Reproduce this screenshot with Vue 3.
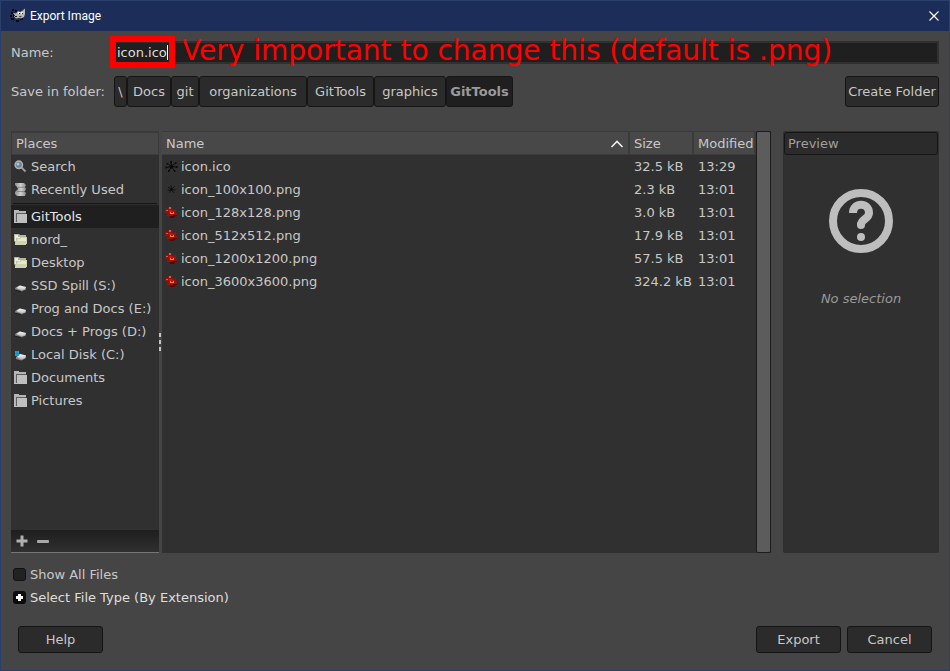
<script setup>
import { ref } from 'vue'

const fileName = ref('icon.ico')
const showAll = ref(false)

const crumbs = ['\\', 'Docs', 'git', 'organizations', 'GitTools', 'graphics', 'GitTools']

const shortcuts = [
  { label: 'Search', icon: 'search' },
  { label: 'Recently Used', icon: 'recent' },
]

const places = [
  { label: 'GitTools', icon: 'folder', active: true },
  { label: 'nord_', icon: 'home' },
  { label: 'Desktop', icon: 'home' },
  { label: 'SSD Spill (S:)', icon: 'disk' },
  { label: 'Prog and Docs (E:)', icon: 'disk' },
  { label: 'Docs + Progs (D:)', icon: 'disk' },
  { label: 'Local Disk (C:)', icon: 'system' },
  { label: 'Documents', icon: 'folder' },
  { label: 'Pictures', icon: 'folder' },
]

const files = [
  { name: 'icon.ico', size: '32.5 kB', modified: '13:29', icon: 'splat' },
  { name: 'icon_100x100.png', size: '2.3 kB', modified: '13:01', icon: 'splat-small' },
  { name: 'icon_128x128.png', size: '3.0 kB', modified: '13:01', icon: 'red' },
  { name: 'icon_512x512.png', size: '17.9 kB', modified: '13:01', icon: 'red' },
  { name: 'icon_1200x1200.png', size: '57.5 kB', modified: '13:01', icon: 'red' },
  { name: 'icon_3600x3600.png', size: '324.2 kB', modified: '13:01', icon: 'red' },
]
</script>

<template>
  <div class="window">
    <svg class="defs" aria-hidden="true">
      <defs>
        <linearGradient id="gDisk" x1="0" y1="0" x2="0" y2="1">
          <stop offset="0" stop-color="#f8f8f8" />
          <stop offset="1" stop-color="#b4b4b4" />
        </linearGradient>
        <linearGradient id="gRecent" x1="0" y1="0" x2="1" y2="0">
          <stop offset="0" stop-color="#8d8d8d" />
          <stop offset="0.5" stop-color="#d0d0d0" />
          <stop offset="1" stop-color="#8d8d8d" />
        </linearGradient>
        <symbol id="i-search" viewBox="0 0 13 13">
          <path d="M7.500 7.500 L11.500 11.500" stroke="#9a9a9a" stroke-width="2" />
          <circle cx="4.800" cy="4.800" r="3.700" fill="#6f8298" stroke="#b0b0b0" stroke-width="1.500" />
          <circle cx="4" cy="4" r="1.500" fill="#b4c4d2" />
        </symbol>
        <symbol id="i-recent" viewBox="0 0 13 13">
          <path d="M1 0 H10 L12 2 L11 4 H3 L1 2 Z" fill="url(#gRecent)" />
          <path d="M3 4 H11 L12 6 L11 8 H2 L4 6 Z" fill="url(#gRecent)" />
          <path d="M1 9 L2 8 H10 L12 10 L11 13 H3 L1 11 Z" fill="url(#gRecent)" />
          <path d="M4 4.300 H11 M3 8.500 H10" stroke="#777" stroke-width="0.700" />
        </symbol>
        <symbol id="i-folder" viewBox="0 0 13 13">
          <path d="M0 0 H5 V1 H12 V3 H2 V12 H0 Z" fill="#b5b5b5" />
          <path d="M2 3 H12 V4 H3 V12 H2 Z" fill="#5e5e5e" />
          <path d="M3 4 H13 V13 H0 V12 H3 Z" fill="#bfbfbf" />
        </symbol>
        <symbol id="i-home" viewBox="0 0 13 13">
          <path d="M0 1 H5 L6 2 H12 V12 H1 V9 L0 8 Z" fill="#b4b79a" />
          <path d="M1 2 H4 V4 H11 V5 H2 V8 H1 Z" fill="#eef0d6" />
          <path d="M3 5 H6 V4 H13 V11 H12 V12 H1 V11 Z" fill="#cfd3b0" />
          <path d="M4 6 H7 V5 H12 V8 H3 Z" fill="#e6e9cf" />
        </symbol>
        <symbol id="i-disk" viewBox="0 0 13 13">
          <path d="M1 9 L5 6.500 L12 8 V10.500 L7.500 12.500 L1 11 Z" fill="#777" />
          <path d="M2 9 L6 6.500 L12 8 L11 10.500 L7.500 11.500 Z" fill="url(#gDisk)" />
          <path d="M0.500 11 L7 12.500" stroke="#1d1d1d" />
        </symbol>
        <symbol id="i-system" viewBox="0 0 13 13">
          <path d="M2 9 L6 6 L12 7.500 V10 L7.500 12.500 L2 11 Z" fill="#888" />
          <path d="M3 9 L6 6 L12 7.500 L11 10 L7.500 11.500 Z" fill="url(#gDisk)" />
          <path d="M1 3 H5 V8 H1 Z" fill="#12a7dc" />
          <path d="M1 5.500 H5 M3 3 V8" stroke="#0b86ba" stroke-width="0.500" />
        </symbol>
        <symbol id="i-splat" viewBox="0 0 13 13">
          <g stroke="#0a0a0a" fill="#0a0a0a">
            <path d="M6.500 6.500 L6 1.500 M6.500 6.500 L10.500 3 M6.500 6.500 L11.500 7 M6.500 6.500 L9.500 11 M6.500 6.500 L4 11 M6.500 6.500 L1.500 7.500 M6.500 6.500 L2.500 3.500" />
            <circle cx="6.500" cy="6.500" r="1.500" />
            <path d="M5 1 H7 V3 H5 Z M10 2 H11.500 V4 H10 Z M11 6 H12.500 V8 H11 Z M9 10 H10.500 V12 H9 Z M3 10 H4.500 V12 H3 Z M0.500 6.500 H2 V8.500 H0.500 Z M1.500 3 H3 V4.500 H1.500 Z" stroke="none" />
          </g>
        </symbol>
        <symbol id="i-splat-small" viewBox="0 0 13 13">
          <g stroke="#0f0f0f" fill="#0f0f0f" stroke-width="0.900">
            <path d="M6.500 6.500 L6 2.500 M6.500 6.500 L9.500 3.500 M6.500 6.500 L10.500 7 M6.500 6.500 L9 10 M6.500 6.500 L4.500 10 M6.500 6.500 L2.500 7.500 M6.500 6.500 L3 4" />
            <circle cx="6.500" cy="6.500" r="0.800" />
          </g>
        </symbol>
        <symbol id="i-red" viewBox="0 0 13 13">
          <path d="M3 1 H7 V4 H9 V3 H11 V5 H11 V7 H12 V10 H10 V11 H9 V12 H5 V10 H2 V8 H3 V7 H0 V3 H3 Z" fill="#a00c07" />
          <path d="M9 9 H12 V10 H10 V11 H9 V12 H5 V10 H8 V9 H9 Z" fill="#560403" />
          <path d="M4 4 H7 V5 H9 V6 H4 Z" fill="#c8150d" />
          <path d="M4 1 H6 V3 H4 Z M1 4 H3 V5 H1 Z" fill="#b9625e" />
          <path d="M5 6 H6 V7 H8 V6 H9 V8 H5 Z" fill="#e58a35" />
        </symbol>
      </defs>
    </svg>

    <header class="titlebar">
      <svg class="logo" viewBox="0 0 16 16" width="16" height="16" aria-hidden="true">
        <path d="M2 1 H4 V3 H2 Z M5 2 H7 V4 H5 Z M1 4 H3 V6 H1 Z M0 7 H2 V9 H0 Z M3 6 H5 V9 H3 Z M1 10 H4 V12 H1 Z M6 12 H9 V14 H6 Z M10 10 H13 V12 H10 Z" fill="#060a14" />
        <path d="M3 5 L6 5.500 L8 3 L10 4 L12 3 L15 0.500 V6 L14 9 L11 10.500 L9 10 L6 10.500 L4 8.500 L5 7.500 Z" fill="#b8b9b2" />
        <path d="M8 4 H10 V6 H8 Z M11 4 H13 V6 H11 Z" fill="#f2f2f2" />
        <path d="M9 5 H10 V6 H9 Z M12 5 H13 V6 H12 Z M5 8 H7 V9 H5 Z M9 8 L12 8.500 L10 9.500 Z" fill="#222" />
      </svg>
      <h1 class="title">Export Image</h1>
      <button class="close" type="button" aria-label="Close">
        <svg viewBox="0 0 10 10" width="10" height="10"><path d="M0.500 0.500 L9.500 9.500 M9.500 0.500 L0.500 9.500" stroke="#fff" stroke-width="1.200" /></svg>
      </button>
    </header>

    <main class="content">
      <div class="name-row">
        <label class="row-label" for="file-name">Name:</label>
        <div class="name-field">
          <input id="file-name" v-model="fileName" class="name-input" type="text" />
          <span class="mark-box"><span class="caret"></span></span>
          <span class="mark-text">Very important to change this (default is .png)</span>
        </div>
      </div>

      <div class="folder-row">
        <span class="row-label">Save in folder:</span>
        <nav class="crumbs">
          <button v-for="(c, i) in crumbs" :key="i" type="button" class="btn crumb" :class="{ current: i === crumbs.length - 1 }">{{ c }}</button>
        </nav>
        <button type="button" class="btn create">Create Folder</button>
      </div>

      <div class="panes">
        <aside class="places">
          <div class="col-head">Places</div>
          <ul class="list">
            <li v-for="p in shortcuts" :key="p.label" class="place">
              <svg class="icon"><use :href="'#i-' + p.icon" /></svg>{{ p.label }}
            </li>
          </ul>
          <hr class="rule" />
          <ul class="list">
            <li v-for="p in places" :key="p.label" class="place" :class="{ active: p.active }">
              <svg class="icon"><use :href="'#i-' + p.icon" /></svg>{{ p.label }}
            </li>
          </ul>
          <div class="tools">
            <button type="button" class="tool" aria-label="Add">
              <svg viewBox="0 0 12 12" width="12" height="12"><path d="M4.500 0.500 H7.500 V4.500 H11.500 V7.500 H7.500 V11.500 H4.500 V7.500 H0.500 V4.500 H4.500 Z" fill="#b0b0b0" /></svg>
            </button>
            <button type="button" class="tool" aria-label="Remove">
              <svg viewBox="0 0 12 12" width="12" height="12"><rect x="0" y="5" width="12" height="3" rx="1" fill="#a8a8a8" /></svg>
            </button>
          </div>
        </aside>

        <div class="splitter"><i></i><i></i><i></i></div>

        <section class="files">
          <table class="table">
            <colgroup><col /><col class="c-size" /><col class="c-mod" /></colgroup>
            <thead>
              <tr>
                <th>
                  <span class="sort">Name
                    <svg viewBox="0 0 14 8" width="14" height="8"><path d="M1.500 7 L7 1.500 L12.500 7" fill="none" stroke="#eee" stroke-width="1.600" /></svg>
                  </span>
                </th>
                <th>Size</th>
                <th>Modified</th>
              </tr>
            </thead>
            <tbody>
              <tr v-for="f in files" :key="f.name">
                <td><span class="file"><svg class="icon"><use :href="'#i-' + f.icon" /></svg>{{ f.name }}</span></td>
                <td>{{ f.size }}</td>
                <td>{{ f.modified }}</td>
              </tr>
            </tbody>
          </table>
          <div class="scrollbar"></div>
        </section>

        <aside class="preview">
          <button type="button" class="preview-head">Preview</button>
          <svg class="question" viewBox="0 0 64 64" width="64" height="64" aria-hidden="true">
            <circle cx="32" cy="32" r="28" fill="none" stroke="#bebebe" stroke-width="8" />
            <path d="M24 24 C24 13 40 13 40 24 C40 30 32 30 32 36" fill="none" stroke="#bebebe" stroke-width="8" />
            <circle cx="32" cy="36" r="4" fill="#bebebe" />
            <circle cx="32" cy="48" r="4" fill="#bebebe" />
          </svg>
          <p class="empty">No selection</p>
        </aside>
      </div>

      <div class="options">
        <label class="option"><input v-model="showAll" class="check" type="checkbox" />Show All Files</label>
        <button type="button" class="option expander">
          <svg viewBox="0 0 13 13" width="13" height="13"><rect width="13" height="13" rx="3" fill="#0c0c0c" /><path d="M5 3 H8 V5 H10 V8 H8 V10 H5 V8 H3 V5 H5 Z" fill="#fff" /></svg>Select File Type (By Extension)
        </button>
      </div>

      <footer class="actions">
        <button type="button" class="btn action help">Help</button>
        <button type="button" class="btn action">Export</button>
        <button type="button" class="btn action">Cancel</button>
      </footer>
    </main>
  </div>
</template>

<style>
body {
  background: #454545;
}
</style>

<style scoped>
* {
  box-sizing: border-box;
}
.window {
  display: flex;
  flex-direction: column;
  min-height: 100vh;
  border: 1px solid #2b3f6c;
  background: #454545;
  color: #c8c8c8;
  font: 13px/23px "DejaVu Sans", sans-serif;
}
.defs {
  position: absolute;
  width: 0;
  height: 0;
}
button {
  margin: 0;
  padding: 0;
  border: 0;
  background: none;
  color: inherit;
  font: inherit;
}
.titlebar {
  display: flex;
  align-items: center;
  height: 30px;
  padding: 0 10px 0 9px;
  background: #1b2d58;
}
.title {
  flex: 1;
  margin: 0 0 0 4px;
  color: #fff;
  font: 12px/16px Roboto, "Noto Sans", sans-serif;
}
.close {
  display: flex;
}
.content {
  flex: 1;
  display: flex;
  flex-direction: column;
  padding: 10px 10px 17px;
}
.name-row,
.folder-row {
  display: flex;
  align-items: center;
}
.row-label {
  width: 99px;
  flex: none;
}
.name-field {
  position: relative;
  flex: 1;
}
.name-input {
  display: block;
  width: 100%;
  height: 23px;
  padding: 0 5px;
  border: 2px solid #303030;
  outline: 0;
  background: #1f1f1f;
  color: #dedede;
  font: 13px/19px "DejaVu Sans", sans-serif;
}
.mark-box {
  position: absolute;
  left: 0;
  top: -5px;
  width: 65px;
  height: 32px;
  border: 6px solid #f00;
}
.caret {
  position: absolute;
  right: 1px;
  top: 3px;
  width: 1px;
  height: 15px;
  background: #fff;
}
.mark-text {
  position: absolute;
  left: 72px;
  top: -6px;
  color: #f00;
  font-size: 28px;
  line-height: 32px;
  white-space: nowrap;
}
.folder-row {
  margin-top: 12px;
}
.btn {
  border: 1px solid #151515;
  border-radius: 3px;
  background: #2b2b2b;
}
.crumbs {
  display: grid;
  grid-template-columns: 13px 44px 28px 108px 67px 72px 67px;
  flex: 1;
  margin-left: 4px;
}
.crumb,
.create {
  height: 31px;
}
.crumb.current {
  background: #1f1f1f;
  color: #9a9a9a;
  font-weight: bold;
}
.create {
  width: 94px;
  white-space: nowrap;
}
.panes {
  flex: 1;
  display: flex;
  margin-top: 24px;
}
.places {
  display: flex;
  flex-direction: column;
  width: 148px;
  border: 1px solid #3b3b3b;
  border-width: 1px 0 0;
  background: #303030;
}
.col-head {
  height: 23px;
  padding-left: 4px;
  border: 1px solid #3b3b3b;
  background: #484848;
  line-height: 21px;
}
.list {
  margin: 0;
  padding: 0;
  list-style: none;
}
.place {
  display: flex;
  align-items: center;
  gap: 4px;
  height: 23px;
  padding-left: 3px;
  white-space: nowrap;
}
.place.active {
  background: #1f1f1f;
  color: #e6e6e6;
}
.icon {
  flex: none;
  width: 13px;
  height: 13px;
}
.rule {
  width: 144px;
  height: 1px;
  margin: 2px auto 1px;
  border: 0;
  background: #151515;
}
.tools {
  display: flex;
  align-items: center;
  gap: 9px;
  height: 23px;
  margin-top: auto;
  padding-left: 5px;
  border-bottom: 1px solid #777;
  background: linear-gradient(#1e1e1e, #303030);
}
.tool {
  display: flex;
}
.splitter {
  display: flex;
  flex-direction: column;
  justify-content: center;
  gap: 3px;
  width: 3px;
}
.splitter i {
  width: 2px;
  height: 4px;
  background: #c4c4c4;
}
.files {
  flex: 1;
  display: flex;
  align-items: flex-start;
  background: #303030;
}
.table {
  flex: 1;
  border-spacing: 0;
  border-top: 1px solid #3b3b3b;
  table-layout: fixed;
  width: 100%;
}
.c-size {
  width: 64px;
}
.c-mod {
  width: 62px;
}
th,
td {
  height: 23px;
  padding: 0 0 0 4px;
  line-height: 23px;
  font-weight: normal;
  text-align: left;
  white-space: nowrap;
}
th {
  padding-top: 1px;
  border: solid #3b3b3b;
  border-width: 0 2px 1px 0;
  background: #484848;
  line-height: 21px;
}
.sort {
  display: flex;
  align-items: center;
  justify-content: space-between;
  padding-right: 4px;
}
td:first-child {
  padding-left: 3px;
}
.file {
  display: flex;
  align-items: center;
  gap: 3px;
}
.scrollbar {
  align-self: stretch;
  width: 15px;
  border: 1px solid #1c1c1c;
  border-radius: 2px;
  background: #5c5c5c;
}
.preview {
  display: flex;
  flex-direction: column;
  align-items: center;
  width: 156px;
  margin-left: 12px;
  padding: 1px;
  border-radius: 2px;
  background: #303030;
}
.preview-head {
  width: 100%;
  height: 23px;
  padding-left: 3px;
  border: 1px solid #151515;
  border-radius: 3px;
  background: #2b2b2b;
  color: #9f9f9f;
  line-height: 21px;
  text-align: left;
}
.question {
  margin-top: 34px;
}
.empty {
  margin: 34px 0 0;
  color: #9a9a9a;
  font-style: italic;
}
.options {
  display: flex;
  flex-direction: column;
  align-items: flex-start;
  margin-top: 10px;
  padding-left: 2px;
}
.option {
  display: flex;
  align-items: center;
  gap: 4px;
  height: 23px;
}
.expander {
  color: #dedede;
}
.check {
  appearance: none;
  width: 13px;
  height: 13px;
  margin: 0;
  border: 1px solid #111;
  border-radius: 3px;
  background: #222;
}
.actions {
  display: flex;
  gap: 6px;
  margin-top: 17px;
  padding: 0 7px;
}
.action {
  width: 85px;
  height: 27px;
}
.help {
  margin-right: auto;
}
</style>
